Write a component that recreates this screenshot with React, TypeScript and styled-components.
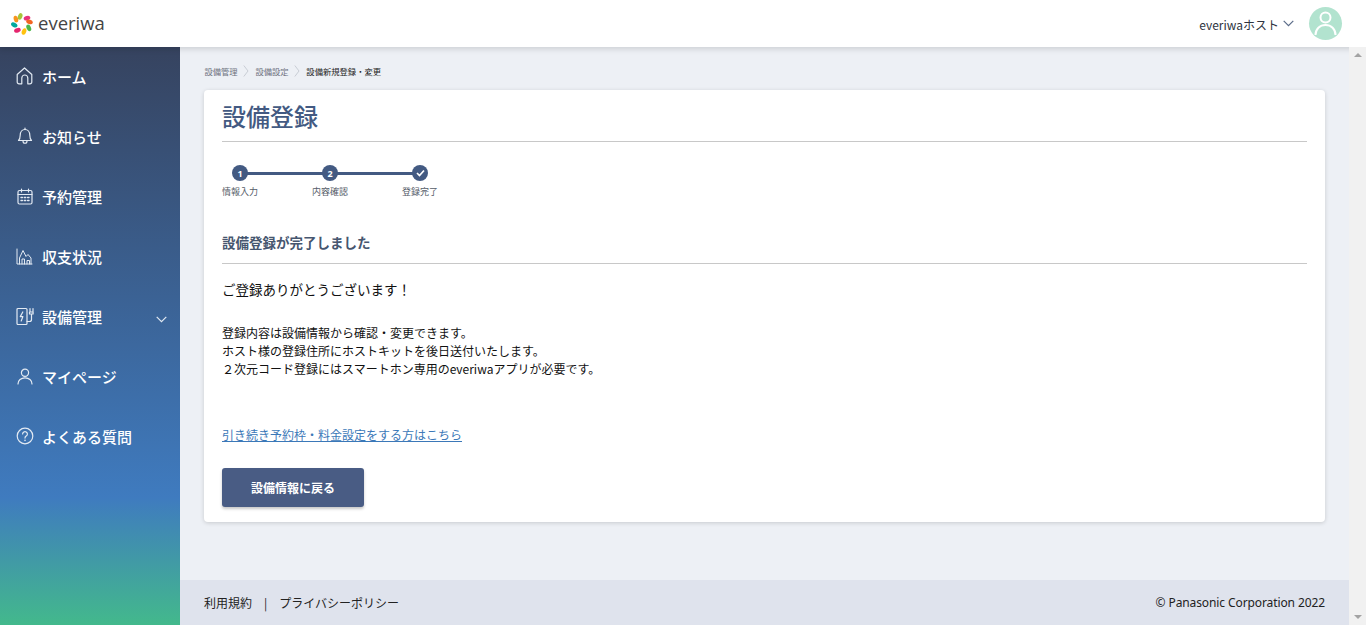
import React from "react";
import styled, { createGlobalStyle } from "styled-components";

const Global = createGlobalStyle`
  html, body { margin: 0; padding: 0; height: 100%; overflow: hidden; }
  body { font-family: "Noto Sans CJK JP", "Noto Sans", sans-serif; color: #000; }
  * { box-sizing: border-box; }
`;
const Page = styled.div`display:flex;flex-direction:column;height:625px;width:1366px;overflow:hidden;`;
const Header = styled.header`height:47px;flex:none;background:#fff;display:flex;align-items:center;justify-content:space-between;padding:0 24px 0 11px;position:relative;z-index:2;box-shadow:0 2px 6px rgba(0,0,0,.14);`;
const Logo = styled.div`display:flex;align-items:center;gap:5px;`;
const LogoText = styled.span`font-family:"Open Sans","Noto Sans",sans-serif;font-size:18.5px;font-weight:500;color:#444;line-height:1;`;
const UserBox = styled.div`display:flex;align-items:center;`;
const UserName = styled.span`font-size:12px;color:#2e3440;margin-right:4px;padding-top:1px;`;
const Avatar = styled.div`width:33px;height:33px;border-radius:50%;background:#b2e3cf;display:flex;align-items:center;justify-content:center;margin-left:15px;`;
const Body = styled.div`flex:1;display:flex;min-height:0;`;
const Side = styled.nav`width:180px;flex:none;background:linear-gradient(180deg,#36435f 0%,#3f7bbf 78%,#43b98c 100%);display:flex;flex-direction:column;`;
const NavItem = styled.div`height:60px;display:flex;align-items:center;padding:0 0 2px 15px;color:#fff;font-size:15px;font-weight:500;gap:8px;position:relative;`;
const NavIcon = styled.span`width:19px;height:20px;display:flex;align-items:center;justify-content:center;flex:none;`;
const NavChevron = styled.span`position:absolute;left:156px;top:29px;display:flex;`;
const Main = styled.div`flex:1;display:flex;flex-direction:column;background:#edf0f5;min-width:0;`;
const Content = styled.main`flex:1;padding:17px 24px 0 24px;`;
const Crumbs = styled.div`display:flex;align-items:center;height:14px;font-size:8.3px;padding-left:.4px;margin-bottom:12px;`;
const Crumb = styled.span<{ $on?: boolean }>`color:${p => p.$on ? "#222" : "#6d7280"};`;
const CrumbSep = styled.span`margin:0 5.9px;display:flex;`;
const Card = styled.section`background:#fff;border-radius:4px;box-shadow:0 1px 4px rgba(0,0,0,.16);padding:8px 18px 15px;height:432px;`;
const Title = styled.h1`margin:0;font-size:24px;font-weight:500;color:#435a82;line-height:36px;padding-bottom:7px;border-bottom:1px solid #c8c8c8;height:44px;`;
const Steps = styled.div`display:flex;margin-top:23px;height:34px;width:216px;position:relative;`;
const StepLine = styled.div`position:absolute;left:18px;top:7px;height:3px;width:180px;background:#435a82;`;
const Step = styled.div`width:90px;display:flex;flex-direction:column;align-items:flex-start;position:relative;&:last-child{width:36px;}`;
const StepDot = styled.div`width:16px;height:16px;flex:none;margin-left:10px;border-radius:50%;background:#435a82;color:#fff;font-size:9px;font-weight:700;display:flex;align-items:center;justify-content:center;font-family:"Noto Sans",sans-serif;`;
const StepLabel = styled.div`font-size:9px;color:#555c68;margin-top:4px;line-height:13px;white-space:nowrap;`;
const SubTitle = styled.h2`margin:34px 0 0;font-size:13.5px;font-weight:700;color:#46566f;line-height:18px;height:31px;border-bottom:1px solid #c8c8c8;`;
const Thanks = styled.p`margin:14px 0 0;font-size:13.5px;line-height:22px;color:#111;`;
const Para = styled.p`margin:24px 0 0;font-size:12px;line-height:18px;color:#111;`;
const LinkText = styled.a`display:block;margin-top:48px;font-size:12px;line-height:18px;color:#3b78b8;text-decoration:underline;`;
const Back = styled.button`display:flex;align-items:center;justify-content:center;margin-top:24px;width:142px;height:39px;border:0;border-radius:3px;background:#495c84;color:#fff;font:700 12px "Noto Sans CJK JP",sans-serif;box-shadow:0 2px 3px rgba(0,0,0,.22);`;
const Footer = styled.footer`height:45px;flex:none;background:#dfe3ed;display:flex;align-items:center;justify-content:space-between;padding:0 24px;font-size:12px;color:#222;`;
const FootLinks = styled.div`display:flex;gap:12px;`;
const Copy = styled.span`font-family:"Noto Sans",sans-serif;letter-spacing:-.1px;`;
const Scroll = styled.div`width:17px;flex:none;background:#f1f1f1;display:flex;flex-direction:column;justify-content:space-between;align-items:center;padding:6px 0;position:relative;z-index:3;`;
const Tri = styled.span<{ $up?: boolean }>`width:8px;height:4px;border-left:4px solid transparent;border-right:4px solid transparent;${p => p.$up ? "border-bottom:4px solid #a3a3a3;" : "border-top:4px solid #a3a3a3;"}`;

const ic = { fill: "none", stroke: "#e3eaf3", strokeWidth: 1.2, strokeLinecap: "round" as const, strokeLinejoin: "round" as const };
const Home = () => <svg width="17" height="18" viewBox="0 0 17 18" {...ic}><path d="M1.2 7.5 8.5 1l7.3 6.5V15a1.8 1.8 0 0 1-1.8 1.8h-2.2V11a3 3 0 0 0-6 0v5.8H3A1.8 1.8 0 0 1 1.2 15z" /></svg>;
const Bell = () => <svg width="16" height="18" viewBox="0 0 16 18" {...ic}><path d="M1.5 13.5c1.3-1.2 1.7-2.6 1.7-5.2C3.2 5 5.2 2.5 8 2.5s4.8 2.5 4.8 5.8c0 2.6.4 4 1.7 5.2z" /><path d="M6 14c0 3 4 3 4 0M8 1v1.5" /></svg>;
const Cal = () => <svg width="16" height="17" viewBox="0 0 16 17" {...ic}><rect x="1" y="2.5" width="14" height="13.5" rx="1.5" /><path d="M1 6.5h14M4.5 1v3M11.5 1v3" /><path d="M4 9.5h1.4M7.3 9.5h1.4M10.6 9.5H12M4 12.5h1.4M7.3 12.5h1.4M10.6 12.5H12" strokeWidth="1.4" /></svg>;
const Chart = () => <svg width="17" height="17" viewBox="0 0 17 17" {...ic} strokeWidth="1"><path d="M1 1v15h15" /><path d="M3.5 16V10L7 2.5l3 6 2-2 3 3.5V16" /><path d="M6 16v-5h2.5v5M11 16v-3.5h2.5V16" /></svg>;
const Charger = () => <svg width="18" height="19" viewBox="0 0 18 19" {...ic}><rect x="1" y="1.5" width="10" height="16" rx="1" /><path d="M6.8 5 4.3 9.6h2.6L5.2 14" /><path d="M11 14.5h2.5a2 2 0 0 0 2-2V7M14 1.5V5M17 1.5V5M13.5 5h3.6v2h-3.6z" /></svg>;
const User = () => <svg width="16" height="17" viewBox="0 0 16 17" {...ic}><circle cx="8" cy="4.8" r="3.6" /><path d="M1 16c0-3.6 3-6.2 7-6.2s7 2.6 7 6.2" /></svg>;
const Help = () => <svg width="18" height="18" viewBox="0 0 18 18" {...ic}><circle cx="9" cy="9" r="7.8" /><path d="M6.6 7a2.4 2.4 0 1 1 3.6 2.1c-.8.5-1.2 1-1.2 2" /><path d="M9 13.3v.1" strokeWidth="1.5" /></svg>;
const Chevron = ({ c = "#e3eaf3" }: { c?: string }) => <svg width="11" height="7" viewBox="0 0 11 7" fill="none" stroke={c} strokeWidth="1.2"><path d="M.7 .8 5.5 5.6 10.3 .8" /></svg>;
const Sep = () => <svg width="6" height="12" viewBox="0 0 6 12" fill="none" stroke="#bfc4cc" strokeWidth=".8"><path d="M.8 .5 5 6 .8 11.5" /></svg>;

const petals: [number, string][] = [[-14, "#a4c639"], [40, "#e8327c"], [74, "#f26522"], [120, "#4cb648"], [165, "#ffc20e"], [216, "#e5266e"], [263, "#00a99d"], [309, "#f7941d"]];
const LogoMark = () => (
  <svg width="22" height="22" viewBox="0 0 22 22">
    {petals.map(([a, c]) => <ellipse key={a} cx="11" cy="3.2" rx="2.2" ry="3.4" fill={c} transform={`rotate(${a} 11 11) rotate(35 11 3.2)`} />)}
  </svg>
);

const nav: [string, React.ReactNode, boolean?][] = [
  ["ホーム", <Home />], ["お知らせ", <Bell />], ["予約管理", <Cal />], ["収支状況", <Chart />],
  ["設備管理", <Charger />, true], ["マイページ", <User />], ["よくある質問", <Help />],
];

export default function App() {
  return (
    <Page>
      <Global />
      <Header>
        <Logo><LogoMark /><LogoText>everiwa</LogoText></Logo>
        <UserBox>
          <UserName>everiwaホスト</UserName>
          <Chevron c="#5a6b88" />
          <Avatar>
            <svg width="23" height="25" viewBox="0 0 23 25" fill="none" stroke="#fff" strokeWidth="2"><circle cx="11.5" cy="6.5" r="5" /><path d="M1.5 24c0-6 4.3-10 10-10s10 4 10 10" /></svg>
          </Avatar>
        </UserBox>
      </Header>
      <Body>
        <Side>
          {nav.map(([t, i, more]) => (
            <NavItem key={t}>
              <NavIcon>{i}</NavIcon>{t}
              {more && <NavChevron><Chevron /></NavChevron>}
            </NavItem>
          ))}
        </Side>
        <Main>
          <Content>
            <Crumbs>
              <Crumb>設備管理</Crumb><CrumbSep><Sep /></CrumbSep>
              <Crumb>設備設定</Crumb><CrumbSep><Sep /></CrumbSep>
              <Crumb $on>設備新規登録・変更</Crumb>
            </Crumbs>
            <Card>
              <Title>設備登録</Title>
              <Steps>
                <StepLine />
                <Step><StepDot>1</StepDot><StepLabel>情報入力</StepLabel></Step>
                <Step><StepDot>2</StepDot><StepLabel>内容確認</StepLabel></Step>
                <Step>
                  <StepDot><svg width="9" height="8" viewBox="0 0 9 8" fill="none" stroke="#fff" strokeWidth="1.7"><path d="M1 4l2.5 2.5L8 1.5" /></svg></StepDot>
                  <StepLabel>登録完了</StepLabel>
                </Step>
              </Steps>
              <SubTitle>設備登録が完了しました</SubTitle>
              <Thanks>ご登録ありがとうございます！</Thanks>
              <Para>登録内容は設備情報から確認・変更できます。<br />ホスト様の登録住所にホストキットを後日送付いたします。<br />２次元コード登録にはスマートホン専用のeveriwaアプリが必要です。</Para>
              <LinkText>引き続き予約枠・料金設定をする方はこちら</LinkText>
              <Back>設備情報に戻る</Back>
            </Card>
          </Content>
          <Footer>
            <FootLinks><span>利用規約</span><span>|</span><span>プライバシーポリシー</span></FootLinks>
            <Copy>© Panasonic Corporation 2022</Copy>
          </Footer>
        </Main>
        <Scroll><Tri $up /><Tri /></Scroll>
      </Body>
    </Page>
  );
}
